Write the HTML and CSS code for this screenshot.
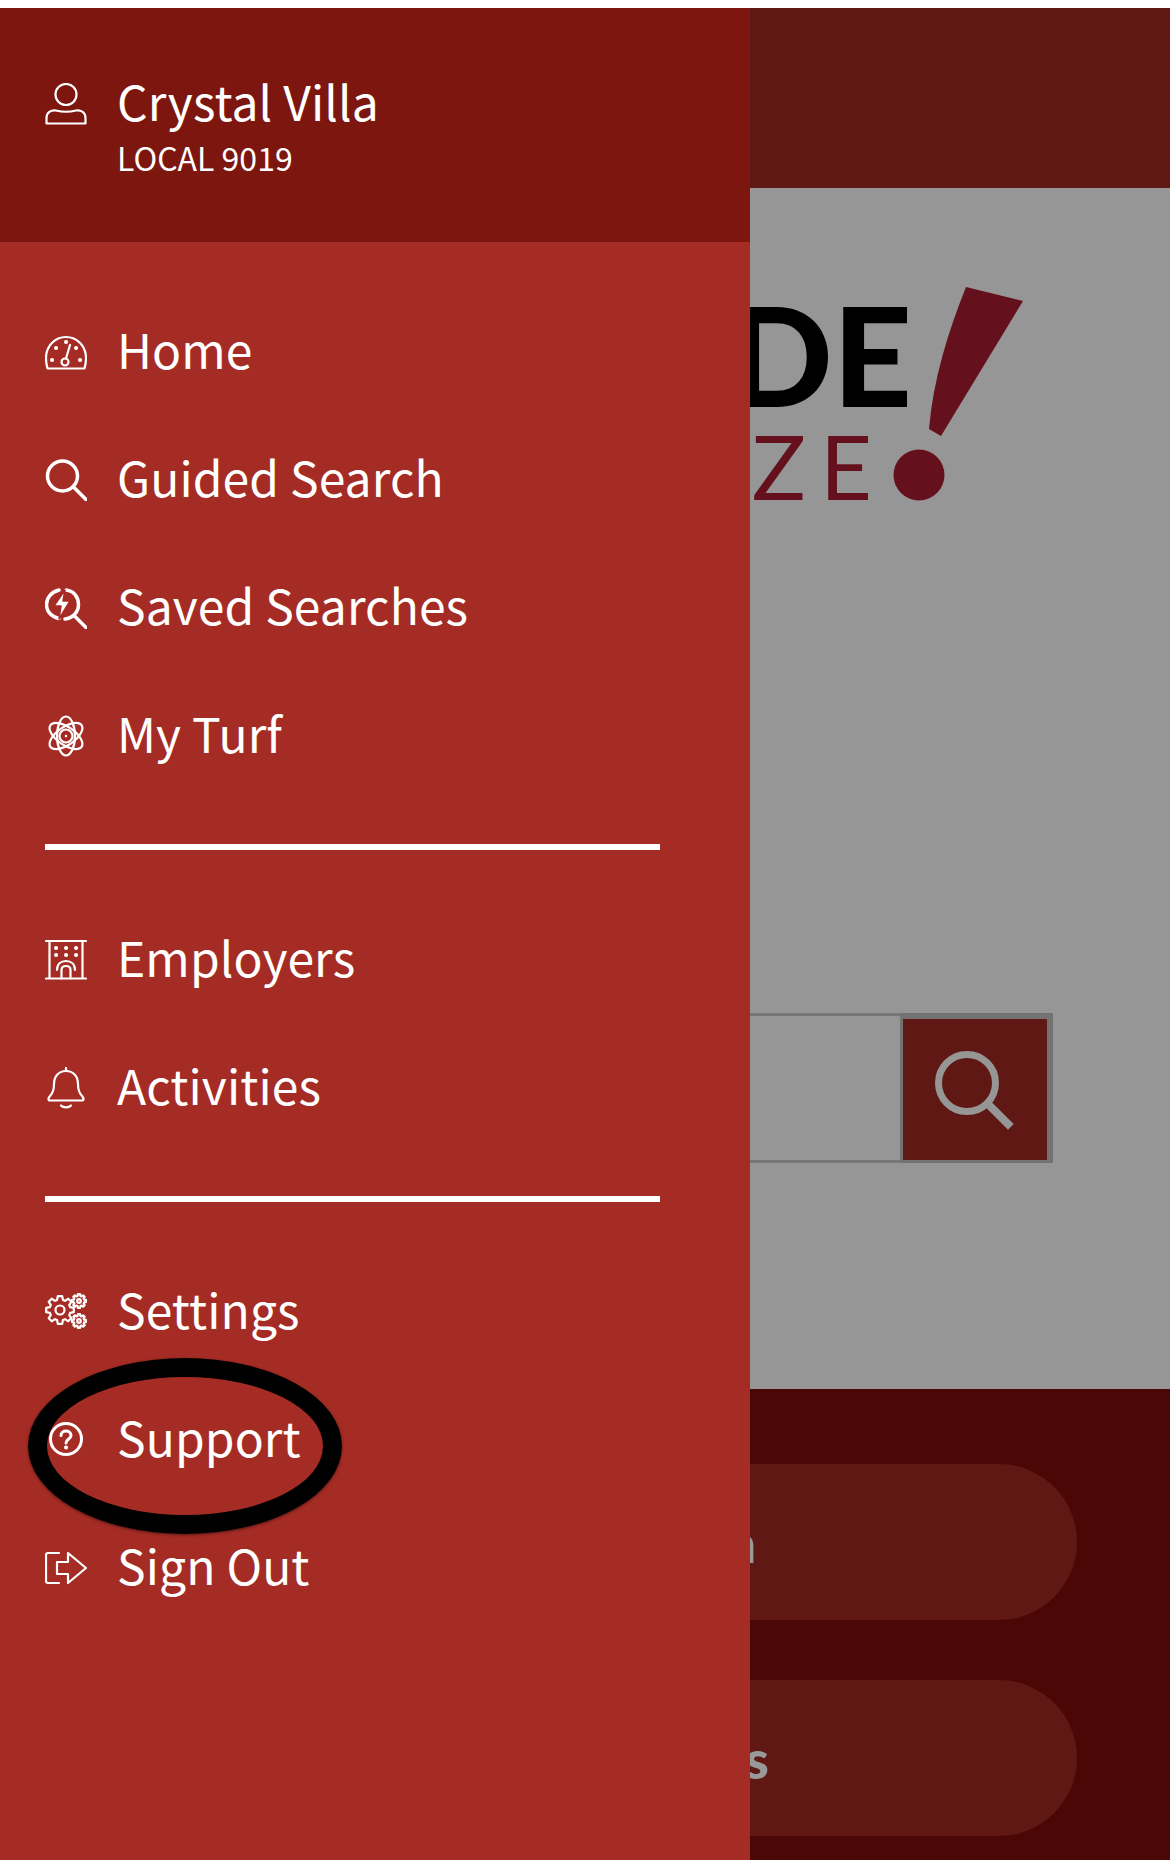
FILE: index.html
```html
<!DOCTYPE html>
<html lang="en">
    <head>
        <meta charset="UTF-8">
        <title>Menu</title>
        <link rel="stylesheet" href="styles.css">
    </head>
    <body>
        <div class="page">
            <div class="topbar"></div>
            <div class="main">
                <div class="logo">
                    <div class="logo_text">
                        <div class="logo_big">DE</div>
                        <div class="logo_small">ZE</div>
                    </div>
                    <svg class="logo_mark" viewBox="0 0 140 225">
                        <path d="M76 7 133 21 51 156 39 149C43 100 58 52 76 7Z"/>
                        <circle cx="29" cy="195" r="25.5"/>
                    </svg>
                </div>
                <div class="search">
                    <div class="search_input"></div>
                    <div class="search_btn">
                        <svg viewBox="0 0 80 80" width="80" height="80">
                            <circle cx="32" cy="33" r="28.5" fill="none" stroke="#969696" stroke-width="7"/>
                            <path d="M54 55 73 74" stroke="#969696" stroke-width="8" stroke-linecap="square"/>
                        </svg>
                    </div>
                </div>
            </div>
            <div class="bottom">
                <div class="pill pill_thin">Sign In</div>
                <div class="pill pill_bold">Saved Searches</div>
            </div>
        </div>

        <!-- ドロワー -->
        <div class="drawer">
            <div class="profile">
                <svg class="icon profile_icon" viewBox="0 0 42 42">
                    <circle cx="21" cy="11.5" r="10.5"/>
                    <path d="M1.5 40.5V35C1.5 29 6 27 11 27.5 17 29 25 29 31 27.5 36 27 40.500 29 40.500 35V40.500Z"/>
                </svg>
                <div>
                    <div class="profile_name">Crystal Villa</div>
                    <div class="profile_local">LOCAL 9019</div>
                </div>
            </div>

            <div class="group">
                <div class="row">
                    <svg class="icon" viewBox="0 0 42 42">
                        <path d="M2.500 37.500C1.500 34 1 32 1 27 1 15 10 6 21 6S41 15 41 27C41 32 40.500 34 39.500 37.500Z"/>
                        <circle cx="20" cy="31" r="3.500"/>
                        <path d="M21 27.500 25 14"/>
                        <path class="dots" d="M7 29h.1M11 17h.1M21 11h.1M31 17h.1M35 29h.1"/>
                    </svg>
                    <span>Home</span>
                </div>
                <div class="row">
                    <svg class="icon" viewBox="0 0 42 42">
                        <circle class="thick" cx="17.500" cy="17" r="15"/>
                        <path class="thick" d="M29 28.500 41 40.500"/>
                    </svg>
                    <span>Guided Search</span>
                </div>
                <div class="row">
                    <svg class="icon" viewBox="0 0 42 42">
                        <path class="thick" d="M14 3C6 5 1.500 11 1.500 17.500 1.500 25 7 30 14 31.500M21 3C29 4 33.500 10 33.500 17.500 33.500 25 28 31 20 32"/>
                        <path class="thick" d="M29 28.500 41 40.500"/>
                        <path class="solid" d="M20 3 9 19H16L14 32 25 14H18Z"/>
                    </svg>
                    <span>Saved Searches</span>
                </div>
                <div class="row">
                    <svg class="icon" viewBox="0 0 42 42">
                        <ellipse cx="21" cy="21" rx="19" ry="9" transform="rotate(35 21 21)"/>
                        <ellipse cx="21" cy="21" rx="19" ry="9" transform="rotate(-35 21 21)"/>
                        <ellipse cx="21" cy="21" rx="9" ry="19.500"/>
                        <circle cx="21" cy="21" r="6.500"/>
                        <circle cx="21" cy="21" r="2" class="solid"/>
                    </svg>
                    <span>My Turf</span>
                </div>
            </div>
            <div class="divider"></div>

            <div class="group">
                <div class="row">
                    <svg class="icon" viewBox="0 0 42 42">
                        <path d="M1 2H41M1 39.500H41M4.500 2V39.500M37.500 2V39.500"/>
                        <path class="dots" d="M11 9h.1M21 9h.1M31 9h.1M11 16h.1M21 16h.1M31 16h.1"/>
                        <path d="M12 31C12 25 16 22 21 22S30 25 30 31"/>
                        <path d="M16.500 39.500V31C16.500 28 18.500 27 21 27S25.500 28 25.500 31V39.500"/>
                    </svg>
                    <span>Employers</span>
                </div>
                <div class="row">
                    <svg class="icon" viewBox="0 0 42 42">
                        <path d="M21 1V4"/>
                        <path d="M4 33.500C3 32 3.500 30.500 5 29 7.500 26.500 9 24 9 17 9 9 14 4 21 4S33 9 33 17C33 24 34.500 26.500 37 29 38.500 30.500 39 32 38 33.500Z"/>
                        <path d="M16 38.500C18 41 24 41 26 38.500"/>
                    </svg>
                    <span>Activities</span>
                </div>
            </div>
            <div class="divider"></div>

            <div class="group">
                <div class="row">
                    <svg class="icon" viewBox="0 0 42 42">
                        <defs>
                            <path id="gear" d="M13.800-2.200 13.800 2.200 10.100 2.900 9.200 5.100 11.300 8.200 8.200 11.300 5.100 9.200 2.900 10.100 2.200 13.800-2.200 13.800-2.900 10.100-5.100 9.200-8.200 11.300-11.300 8.200-9.200 5.100-10.100 2.900-13.800 2.200-13.800-2.200-10.100-2.900-9.200-5.100-11.300-8.200-8.200-11.300-5.100-9.200-2.900-10.100-2.200-13.800 2.200-13.800 2.900-10.100 5.100-9.200 8.200-11.300 11.300-8.200 9.200-5.100 10.100-2.900Z" vector-effect="non-scaling-stroke"/>
                        </defs>
                        <use href="#gear" transform="translate(15 19)"/>
                        <circle cx="15" cy="19" r="4.500"/>
                        <use href="#gear" transform="translate(34 10) scale(.5)"/>
                        <circle cx="34" cy="10" r="1.800"/>
                        <use href="#gear" transform="translate(34 30) scale(.5)"/>
                        <circle cx="34" cy="30" r="1.800"/>
                    </svg>
                    <span>Settings</span>
                </div>
                <div class="row">
                    <svg class="icon" viewBox="0 0 42 42">
                        <circle cx="21" cy="20" r="15.500" class="mid"/>
                        <path class="mid" d="M16 16.500C16 13.500 18.500 12 21 12S26 13.500 26 16.500C26 20 21 20 21 24"/>
                        <path class="dots" d="M21 28.500h.1"/>
                    </svg>
                    <span>Support</span>
                </div>
                <div class="row">
                    <svg class="icon" viewBox="0 0 42 42">
                        <path d="M14 6H3C2 6 1 7 1 8V34C1 35 2 36 3 36H14"/>
                        <path d="M12 15H23V6L41 21 23 36V27H12Z"/>
                    </svg>
                    <span>Sign Out</span>
                </div>
            </div>
        </div>

        <!-- 丸印 -->
        <div class="circled"></div>
    </body>
</html>
```

FILE: styles.css
```css
html,body{margin:0;padding:0;background-color:white;}
body{width:1170px;height:1860px;overflow:hidden;position:relative;font-family:"Lato","Noto Sans",sans-serif;}
.page{padding-top:8px;height:1852px;display:flex;flex-direction:column;}
.topbar{height:180px;background-color:#5f1813;}
.main{height:1201px;background-color:#969696;display:flex;flex-direction:column;align-items:flex-end;}

/* ロゴ */
.logo{display:flex;margin-top:92px;margin-right:140px;}
.logo_text{display:flex;flex-direction:column;align-items:flex-end;margin-right:-22px;}
.logo_big{font-size:138px;font-weight:900;line-height:98px;margin-top:25px;color:#000;}
.logo_small{font-size:90px;font-weight:400;line-height:62px;margin-top:31px;margin-right:26px;letter-spacing:14px;color:#64111d;}
.logo_mark{width:140px;height:225px;fill:#64111d;}

/* 検索 */
.search{display:flex;margin-top:508px;margin-right:117px;width:950px;height:150px;}
.search_input{flex:1;border:solid 3px #777;border-right:none;}
.search_btn{width:144px;height:141px;border:solid 6px #737373;border-left-width:3px;border-bottom-width:3px;background-color:#5f1813;display:flex;align-items:center;justify-content:center;}

/* 下のボタン */
.bottom{flex:1;background-color:#4a0705;display:flex;flex-direction:column;align-items:flex-end;gap:60px;padding:75px 93px 0 0;}
.pill{width:1000px;height:156px;box-sizing:border-box;border-radius:78px;background-color:#5f1813;color:#999;font-size:54px;display:flex;align-items:center;justify-content:flex-end;}
.pill_thin{padding-right:320px;}
.pill_bold{padding-right:308px;font-weight:900;}

/* ドロワー */
.drawer{position:absolute;top:8px;left:0;width:750px;height:1852px;background-color:#a52c24;color:white;font-family:"Noto Sans CJK JP","Lato",sans-serif;}
.profile{height:234px;box-sizing:border-box;background-color:#7c160f;padding:59px 0 0 45px;display:flex;gap:30px;}
.profile_name{font-size:48px;line-height:66px;letter-spacing:.1px;}
.profile_local{font-size:32px;line-height:40px;margin-top:4px;}
.profile_icon{margin-top:16px;}
.group{padding-top:46px;}
.row{height:128px;padding-left:45px;display:flex;align-items:center;gap:30px;font-size:48px;line-height:66px;letter-spacing:.1px;}
.row span{padding-bottom:8px;}
.divider{height:6px;width:615px;margin:44px 0 0 45px;background-color:white;}

/* アイコン */
.icon{width:42px;height:42px;flex-shrink:0;fill:none;stroke:white;stroke-width:2.200;stroke-linejoin:round;stroke-linecap:round;}
.icon .thick{stroke-width:3.500;fill:none;}
.icon .mid{stroke-width:3;}
.icon .solid{fill:white;stroke:#a52c24;stroke-width:1.500;}
.icon .dots{stroke-width:4;}

/* 丸印 */
.circled{position:absolute;left:28px;top:1358px;width:276px;height:138px;border:solid 19px black;border-radius:50%;box-shadow:0 1px 3px rgba(0,0,0,.5);}
```
